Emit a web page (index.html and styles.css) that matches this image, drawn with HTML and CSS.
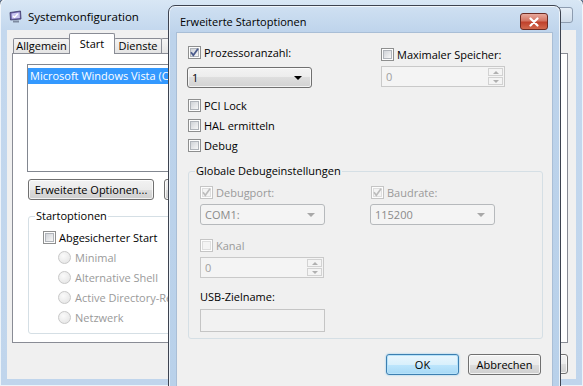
FILE: index.html
```html
<!DOCTYPE html>
<html lang="de">
<head>
    <meta charset="UTF-8">
    <meta name="viewport" content="width=device-width, initial-scale=1.0">
    <title>Erweiterte Startoptionen</title>
    <link rel="stylesheet" href="styles.css">
</head>
<body>
<div class="desk">

    <!-- Hintergrundfenster: Systemkonfiguration -->
    <div class="win syscfg">
        <div class="titlebar">
            <svg class="app-icon" width="13" height="13" viewBox="0 0 13 13">
                <path d="M1 2.5 L11.5 1 L12 9 L1.5 10 Z" fill="#6a5fa8" stroke="#3c3a6a" stroke-width="0.8"/>
                <path d="M2.5 3.4 L10.6 2.3 L10.9 8 L2.8 8.8 Z" fill="#c9c6f0"/>
                <path d="M4 6 L5.6 7.4 L8.8 3.8" fill="none" stroke="#fff" stroke-width="1.3"/>
                <rect x="4" y="10.5" width="6" height="2" fill="#7d8aa0"/>
            </svg>
            <span class="title-text">Systemkonfiguration</span>
            <span class="close-inactive">
                <svg width="10" height="9" viewBox="0 0 10 9"><path d="M2 1.5 L8 7.5 M8 1.5 L2 7.5" stroke="#7a8596" stroke-width="1.6"/></svg>
            </span>
        </div>
        <div class="client">
            <div class="tabs">
                <span class="tab tab-allg">Allgemein</span>
                <span class="tab tab-start active">Start</span>
                <span class="tab tab-dienste">Dienste</span>
                <span class="tab tab-more"></span>
            </div>
            <div class="panel">
                <!-- nur der sichtbare Teil links vom Dialog -->
                <div class="panel-inner">
                    <div class="listbox">
                        <div class="list-item selected">Microsoft Windows Vista (C:\</div>
                    </div>
                    <div class="btn-row">
                        <button class="btn btn-wide">Erweiterte Optionen...</button>
                        <button class="btn btn-wide"></button>
                    </div>
                    <div class="group group-start">
                        <span class="group-label">Startoptionen</span>
                        <div class="chk-row">
                            <span class="chk"></span><span>Abgesicherter Start</span>
                        </div>
                        <div class="radio-list">
                            <div class="chk-row disabled"><span class="radio"></span><span>Minimal</span></div>
                            <div class="chk-row disabled"><span class="radio"></span><span>Alternative Shell</span></div>
                            <div class="chk-row disabled"><span class="radio"></span><span>Active Directory-Re</span></div>
                            <div class="chk-row disabled"><span class="radio"></span><span>Netzwerk</span></div>
                        </div>
                    </div>
                </div>
            </div>
            <div class="bottom-buttons">
                <button class="btn"></button>
            </div>
        </div>
    </div>

    <!-- Vordergrunddialog -->
    <div class="win dialog">
        <div class="titlebar">
            <span class="title-text">Erweiterte Startoptionen</span>
            <span class="close-red">
                <svg width="12" height="10" viewBox="0 0 12 10"><path d="M2.5 1.5 L9.5 8.5 M9.5 1.5 L2.5 8.5" stroke="#fff" stroke-width="2.2" stroke-linecap="round"/></svg>
            </span>
        </div>
        <div class="dlg-client">
            <div class="opt-cols">
                <div class="col-left">
                    <div class="chk-row">
                        <span class="chk"><svg viewBox="0 0 13 13"><path d="M3 6.2 L5.3 9.3 L10 2.8" fill="none" stroke="#4b5b8c" stroke-width="1.8"/></svg></span>
                        <span>Prozessoranzahl:</span>
                    </div>
                    <div class="combo combo-first">
                        <span class="combo-text">1</span><span class="arrow"></span>
                    </div>
                </div>
                <div class="col-right">
                    <div class="chk-row">
                        <span class="chk"></span><span>Maximaler Speicher:</span>
                    </div>
                    <div class="spin disabled">
                        <span class="combo-text">0</span>
                        <span class="spin-btns"><span class="spin-up"></span><span class="spin-down"></span></span>
                    </div>
                </div>
            </div>

            <div class="opt-list">
                <div class="chk-row"><span class="chk"></span><span>PCI Lock</span></div>
                <div class="chk-row"><span class="chk"></span><span>HAL ermitteln</span></div>
                <div class="chk-row"><span class="chk"></span><span>Debug</span></div>
            </div>

            <div class="group group-debug">
                <span class="group-label">Globale Debugeinstellungen</span>
                <div class="debug-grid">
                    <div class="debug-col">
                        <div class="chk-row disabled">
                            <span class="chk"><svg viewBox="0 0 13 13"><path d="M3 6.2 L5.3 9.3 L10 2.8" fill="none" stroke="#bcbcbc" stroke-width="1.6"/></svg></span>
                            <span>Debugport:</span>
                        </div>
                        <div class="combo disabled"><span class="combo-text">COM1:</span><span class="arrow"></span></div>

                        <div class="chk-row disabled kanal">
                            <span class="chk"></span><span>Kanal</span>
                        </div>
                        <div class="spin disabled">
                            <span class="combo-text">0</span>
                            <span class="spin-btns"><span class="spin-up"></span><span class="spin-down"></span></span>
                        </div>

                        <div class="usb-label">USB-Zielname:</div>
                        <div class="textbox disabled"></div>
                    </div>
                    <div class="debug-col col-baud">
                        <div class="chk-row disabled">
                            <span class="chk"><svg viewBox="0 0 13 13"><path d="M3 6.2 L5.3 9.3 L10 2.8" fill="none" stroke="#bcbcbc" stroke-width="1.6"/></svg></span>
                            <span>Baudrate:</span>
                        </div>
                        <div class="combo disabled"><span class="combo-text">115200</span><span class="arrow"></span></div>
                    </div>
                </div>
            </div>

            <div class="dlg-buttons">
                <button class="btn btn-default">OK</button>
                <button class="btn">Abbrechen</button>
            </div>
        </div>
    </div>

</div>
</body>
</html>
```

FILE: styles.css
```css
body {
    margin: 0;
    background: #7f9cc0;
    font-family: "Open Sans", "Segoe UI", sans-serif;
    font-size: 11px;
    color: #000;
    overflow: hidden;
}

.desk {
    position: relative;
    width: 583px;
    height: 386px;
    overflow: hidden;
}

/* Fensterrahmen */
.win {
    position: absolute;
    box-sizing: border-box;
    border: 1px solid #4c5666;
    border-radius: 7px 7px 0 0;
    background: linear-gradient(#d9e7f5, #c4d8ee 30px, #c0d5ec);
    box-shadow: inset 0 0 0 1px rgba(255, 255, 255, 0.7);
    display: flex;
    flex-direction: column;
    padding: 0 7px 7px;
}

.titlebar {
    position: relative;
    display: flex;
    align-items: center;
    flex: none;
}

.title-text {
    font-size: 11px;
    line-height: 16px;
    color: #000;
}

/* Systemkonfiguration */
.syscfg {
    left: -1px;
    top: -2px;
    width: 585px;
    height: 389px;
}

.syscfg .titlebar {
    height: 27px;
    padding: 4px 0 0 2px;
    gap: 6px;
}

.syscfg .title-text {
    font-size: 11.5px;
}

.close-inactive {
    position: absolute;
    right: 3px;
    top: 8px;
    width: 40px;
    height: 16px;
    box-sizing: border-box;
    border: 1px solid #8d9cb0;
    border-radius: 3px;
    background: linear-gradient(#e6eef7, #cfdcea);
    display: flex;
    align-items: center;
    justify-content: center;
}

.client {
    flex: 1;
    background: #f0f0f0;
    padding: 3px 8px 0 5px;
    display: flex;
    flex-direction: column;
}

.tabs {
    display: flex;
    align-items: flex-end;
    height: 20px;
    margin-left: 1px;
}

.tab {
    box-sizing: border-box;
    height: 15px;
    line-height: 13px;
    border: 1px solid #898c95;
    border-bottom: none;
    border-radius: 2px 2px 0 0;
    background: linear-gradient(#f4f4f4, #e4e4e4);
    text-align: center;
    margin-right: -1px;
}

.tab-allg { width: 57px; }
.tab-dienste { width: 48px; }
.tab-more { width: 12px; }
.tab.active {
    position: relative;
    z-index: 1;
    width: 46px;
    height: 21px;
    line-height: 19px;
    background: #fff;
    margin-bottom: -1px;
}

.panel {
    box-sizing: border-box;
    height: 290px;
    background: #fff;
    border: 1px solid #898c95;
}

.panel-inner {
    width: 154px;
    height: 100%;
    overflow: hidden;
    padding: 10px 0 0 14px;
    display: flex;
    flex-direction: column;
}

.listbox {
    flex: none;
    box-sizing: border-box;
    width: 520px;
    height: 108px;
    border: 1px solid #828790;
    padding-top: 3px;
}

.list-item {
    height: 16px;
    line-height: 16px;
    padding-left: 2px;
    white-space: nowrap;
}

.list-item.selected {
    background: #3399ff;
    color: #fff;
}

.btn-row {
    display: flex;
    gap: 10px;
    margin: 7px 0 0 1px;
}

.btn {
    flex: none;
    box-sizing: border-box;
    height: 21px;
    width: 73px;
    padding: 0;
    border: 1px solid #707070;
    border-radius: 3px;
    background: linear-gradient(#f2f2f2, #ebebeb 50%, #dddddd 50%, #cfcfcf);
    box-shadow: inset 0 0 0 1px rgba(255, 255, 255, 0.75);
    font-family: inherit;
    font-size: 11px;
    color: #000;
}

.btn-wide {
    width: 126px;
}

.bottom-buttons {
    display: flex;
    justify-content: flex-end;
    margin-top: 11px;
}

.bottom-buttons .btn { width: 75px; height: 20px; }

/* Gruppen */
.group {
    flex: none;
    position: relative;
    box-sizing: border-box;
    border: 1px solid #d5dfe5;
    border-radius: 3px;
}

.group-label {
    position: absolute;
    top: -9px;
    left: 6px;
    padding: 0 1px;
    line-height: 16px;
    background: #fff;
}

.group-start {
    width: 420px;
    height: 118px;
    margin: 16px 0 0 1px;
    padding: 14px 0 0 14px;
}

.radio-list {
    display: flex;
    flex-direction: column;
    gap: 7px;
    margin: 7px 0 0 15px;
}

/* Checkboxen und Optionsfelder */
.chk-row {
    display: flex;
    align-items: center;
    gap: 3px;
    height: 13px;
    line-height: 13px;
    white-space: nowrap;
}

.chk-row.disabled { color: #9a9a9a; }

.chk {
    position: relative;
    box-sizing: border-box;
    flex: none;
    width: 13px;
    height: 13px;
    border: 1px solid #8e8f8f;
    background: #fdfdfd;
}

.chk::before {
    content: "";
    position: absolute;
    inset: 1px;
    border: 1px solid #b0b4ba;
    background: linear-gradient(135deg, #d0d3d8, #f7f7f7);
}

.chk svg {
    position: absolute;
    left: -1px;
    top: -1px;
    width: 13px;
    height: 13px;
}

.disabled .chk { border-color: #c5c5c5; }
.disabled .chk::before {
    border-color: #dedede;
    background: #f4f4f4;
}

.radio {
    box-sizing: border-box;
    flex: none;
    width: 13px;
    height: 13px;
    border: 1px solid #c8c8c8;
    border-radius: 50%;
    background: radial-gradient(circle at 40% 35%, #fafafa, #e2e2e2);
    margin-right: 1px;
}

/* Dialog */
.dialog {
    left: 168px;
    top: 5px;
    width: 393px;
    height: 395px;
    border-color: #3d4350;
    background: linear-gradient(#cfe0f2, #bdd3eb 28px, #b9d1ea);
}

.dialog .titlebar {
    height: 21px;
    padding: 5px 0 0 4px;
}

.close-red {
    position: absolute;
    right: 5px;
    top: 7px;
    width: 28px;
    height: 17px;
    box-sizing: border-box;
    border: 1px solid #6d2b23;
    border-radius: 3px;
    background: linear-gradient(#e8a89c, #d47563 45%, #c0412c 55%, #d2694e);
    display: flex;
    align-items: center;
    justify-content: center;
}

.dlg-client {
    flex: 1;
    background: #f0f0f0;
    border: 1px solid #a9bed6;
    padding: 13px 11px 0 11px;
    display: flex;
    flex-direction: column;
}

.opt-cols {
    display: flex;
}

.col-left {
    width: 193px;
}

.col-right {
    padding-top: 2px;
}

.combo {
    box-sizing: border-box;
    position: relative;
    width: 125px;
    height: 21px;
    border: 1px solid #707070;
    border-radius: 3px;
    background: linear-gradient(#f3f3f3, #ececec 50%, #dedede 50%, #d2d2d2);
    box-shadow: inset 0 0 0 1px rgba(255, 255, 255, 0.7);
    padding-left: 4px;
}

.combo-text {
    display: block;
    line-height: 19px;
}

.combo-first {
    margin: 8px 0 0 -1px;
}

.arrow {
    position: absolute;
    right: 9px;
    top: 8px;
    border-left: 4px solid transparent;
    border-right: 4px solid transparent;
    border-top: 4px solid #000;
}

.combo.disabled {
    border-color: #b6b9bc;
    background: #f4f4f4;
    box-shadow: none;
    color: #8a8a8a;
}

.combo.disabled .arrow { border-top-color: #a8a8a8; }

.spin {
    box-sizing: border-box;
    position: relative;
    width: 124px;
    height: 21px;
    margin-top: 5px;
    border: 1px solid #c9c9c9;
    background: #f4f4f4;
    padding-left: 4px;
    color: #a0a0a0;
}

.spin-btns {
    position: absolute;
    right: 1px;
    top: 1px;
    display: flex;
    flex-direction: column;
    gap: 1px;
}

.spin-up, .spin-down {
    position: relative;
    box-sizing: border-box;
    width: 15px;
    height: 8px;
    border: 1px solid #d2d2d2;
    background: #f4f4f4;
}

.spin-up::after, .spin-down::after {
    content: "";
    position: absolute;
    left: 4px;
    top: 2px;
    border-left: 3px solid transparent;
    border-right: 3px solid transparent;
}

.spin-up::after { border-bottom: 3px solid #b0b0b0; }
.spin-down::after { border-top: 3px solid #b0b0b0; }

.opt-list {
    display: flex;
    flex-direction: column;
    gap: 7px;
    margin-top: 11px;
}

.group-debug {
    width: 355px;
    height: 168px;
    margin-top: 19px;
    padding: 14px 0 0 11px;
}

.group-debug .group-label { background: #f0f0f0; }

.debug-grid {
    display: flex;
}

.debug-col {
    display: flex;
    flex-direction: column;
    width: 181px;
}

.debug-col .combo {
    margin-top: 5px;
}

.col-baud .combo { margin-left: -1px; }

.kanal {
    margin-top: 14px;
}

.usb-label {
    margin-top: 12px;
    line-height: 14px;
}

.textbox {
    box-sizing: border-box;
    width: 125px;
    height: 23px;
    margin-top: 5px;
    border: 1px solid #c5c5c5;
    background: #f2f2f2;
}

.dlg-buttons {
    display: flex;
    justify-content: flex-end;
    gap: 9px;
    margin-top: 15px;
}

.btn-default {
    border-color: #3c7fb1;
    background: linear-gradient(#eaf6fd, #d9f0fc 50%, #bee6fd 50%, #a7d9f5);
    box-shadow: inset 0 0 0 1px #b7e2f9, 0 0 2px #7cc0ea;
}
```
